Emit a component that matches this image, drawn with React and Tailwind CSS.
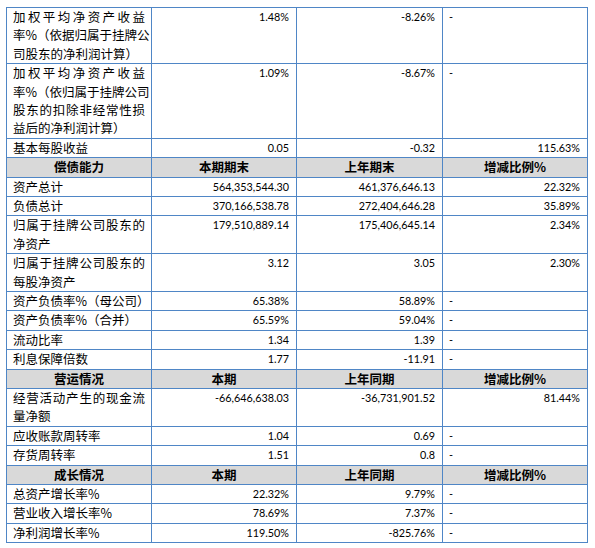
const rows = [
  { label: ["加权平均净资产收益", "率%（依据归属于挂牌公", "司股东的净利润计算）"], a: "1.48%", b: "-8.26%", c: "-" },
  { label: ["加权平均净资产收益", "率%（依归属于挂牌公司", "股东的扣除非经常性损", "益后的净利润计算）"], a: "1.09%", b: "-8.67%", c: "-" },
  { label: ["基本每股收益"], a: "0.05", b: "-0.32", c: "115.63%" },
  { header: ["偿债能力", "本期期末", "上年期末", "增减比例%"] },
  { label: ["资产总计"], a: "564,353,544.30", b: "461,376,646.13", c: "22.32%" },
  { label: ["负债总计"], a: "370,166,538.78", b: "272,404,646.28", c: "35.89%" },
  { label: ["归属于挂牌公司股东的", "净资产"], a: "179,510,889.14", b: "175,406,645.14", c: "2.34%" },
  { label: ["归属于挂牌公司股东的", "每股净资产"], a: "3.12", b: "3.05", c: "2.30%" },
  { label: ["资产负债率%（母公司）"], a: "65.38%", b: "58.89%", c: "-" },
  { label: ["资产负债率%（合并）"], a: "65.59%", b: "59.04%", c: "-" },
  { label: ["流动比率"], a: "1.34", b: "1.39", c: "-" },
  { label: ["利息保障倍数"], a: "1.77", b: "-11.91", c: "-" },
  { header: ["营运情况", "本期", "上年同期", "增减比例%"] },
  { label: ["经营活动产生的现金流", "量净额"], a: "-66,646,638.03", b: "-36,731,901.52", c: "81.44%" },
  { label: ["应收账款周转率"], a: "1.04", b: "0.69", c: "-" },
  { label: ["存货周转率"], a: "1.51", b: "0.8", c: "-" },
  { header: ["成长情况", "本期", "上年同期", "增减比例%"] },
  { label: ["总资产增长率%"], a: "22.32%", b: "9.79%", c: "-" },
  { label: ["营业收入增长率%"], a: "78.69%", b: "7.37%", c: "-" },
  { label: ["净利润增长率%"], a: "119.50%", b: "-825.76%", c: "-" },
];

const cell = "border border-[#4f86c6] px-[6px] py-0 align-top";
const num = "font-['Lato','Liberation_Sans',sans-serif] text-[10.8px] leading-[18.4px] text-right pr-[7px]";

export default function App() {
  return (
    <div className="w-[595px] h-[548px] bg-white pl-[6px] pt-[7px] text-black font-['Noto_Sans_CJK_SC',sans-serif]">
      <table className="table-fixed border-collapse w-[581px]">
        <colgroup>
          <col className="w-[145px]" />
          <col className="w-[145px]" />
          <col className="w-[146px]" />
          <col className="w-[145px]" />
        </colgroup>
        <tbody>
          {rows.map((r, i) =>
            r.header ? (
              <tr key={i} className="bg-[#d9d9d9]">
                {r.header.map((h, j) => (
                  <td key={j} className={`${cell} text-center font-bold text-[12.5px] leading-[18.4px]`}>
                    {h}
                  </td>
                ))}
              </tr>
            ) : (
              <tr key={i}>
                <td className={`${cell} text-[12.5px] leading-[18.4px]`}>
                  {r.label.map((line, k) => (
                    <div
                      key={k}
                      className={
                        k < r.label.length - 1
                          ? "h-[18.4px] text-justify [text-align-last:justify] whitespace-nowrap"
                          : "h-[18.4px] whitespace-nowrap"
                      }
                    >
                      {line}
                    </div>
                  ))}
                </td>
                <td className={`${cell} ${num}`}>{r.a}</td>
                <td className={`${cell} ${num}`}>{r.b}</td>
                <td className={`${cell} ${num} ${r.c === "-" ? "!text-left" : ""}`}>{r.c}</td>
              </tr>
            )
          )}
        </tbody>
      </table>
    </div>
  );
}
